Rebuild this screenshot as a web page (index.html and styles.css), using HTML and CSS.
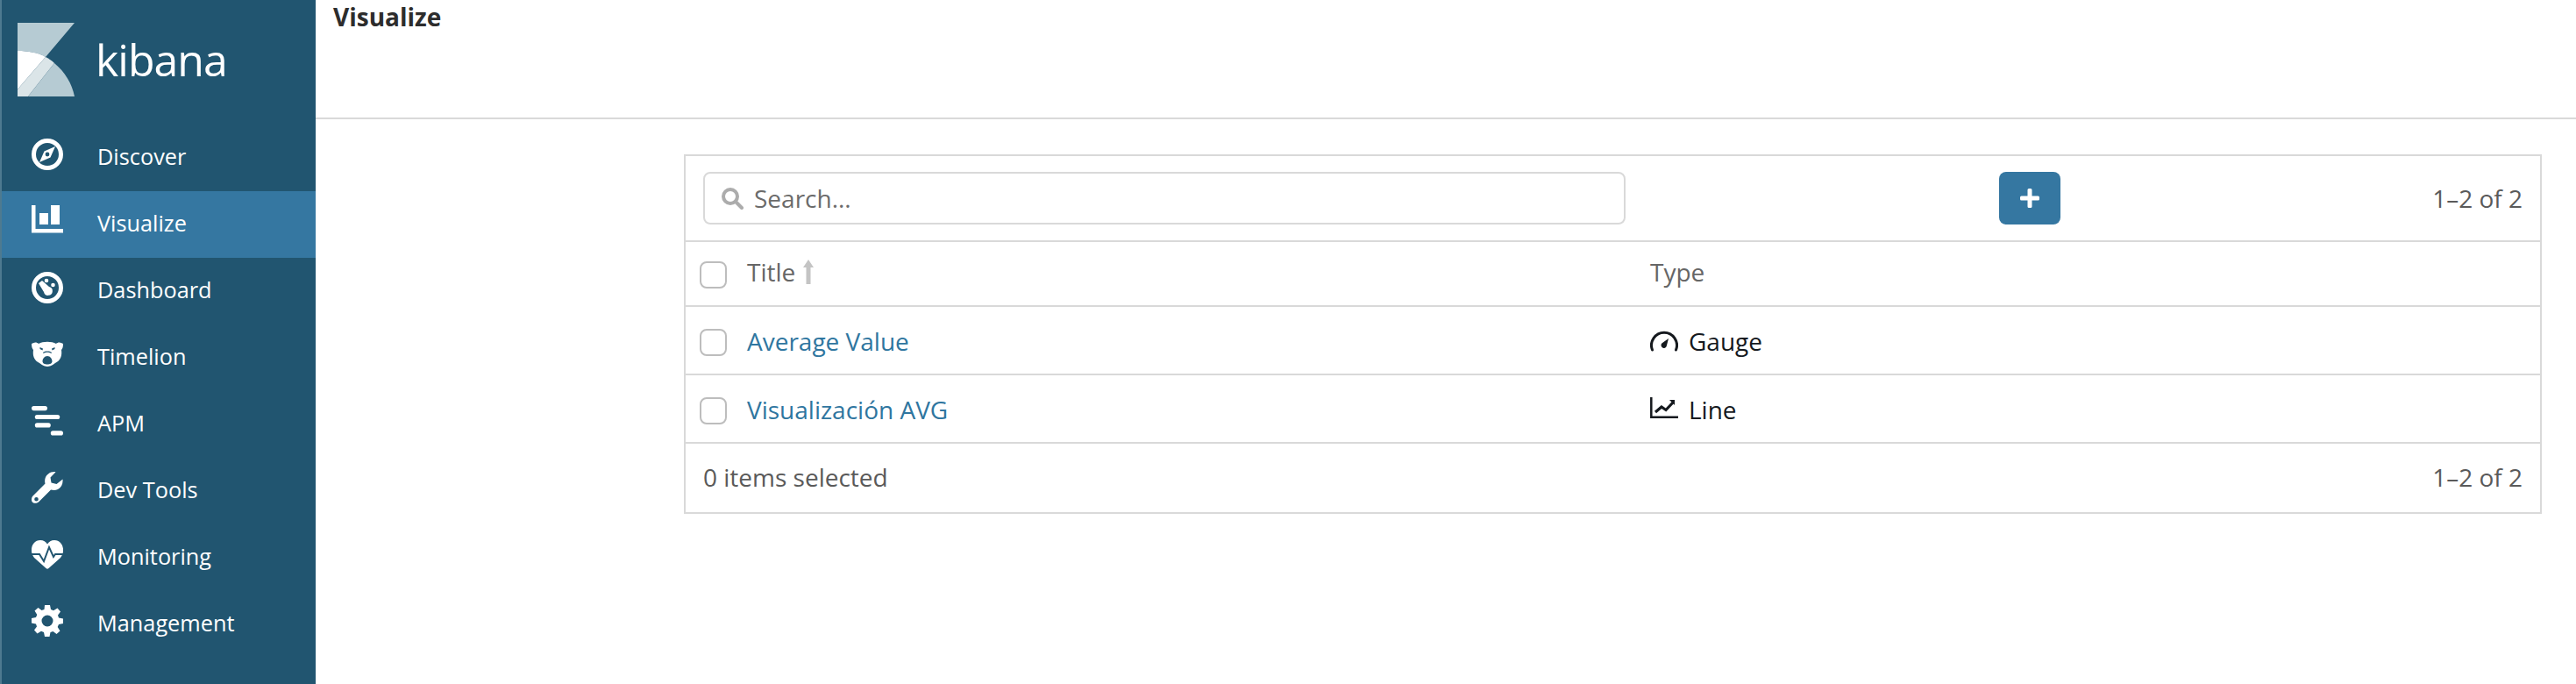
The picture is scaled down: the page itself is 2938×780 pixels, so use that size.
FILE: index.html
```html
<!DOCTYPE html>
<html lang="en">
<head>
<meta charset="utf-8">
<title>Visualize - Kibana</title>
<link rel="stylesheet" href="styles.css">
</head>
<body>
<div class="app">
  <nav class="sidebar">
    <div class="brand">
      <svg class="logo" width="65" height="84" viewBox="0 0 65 84">
        <path fill="#b6cbd3" d="M0 0H65L32 39C24 34 12 32 0 32Z"/>
        <path fill="#fff" d="M0 32C12 32 24 34 32 39L0 76Z"/>
        <path fill="#dbe5e8" d="M0 76L32 39C35 40.500 39 43 42 46L12 84H0Z"/>
        <path fill="#b6cbd3" d="M12 84L42 46C54 56 62 69 65 84Z"/>
      </svg>
      <span class="wordmark">kibana</span>
    </div>
    <a class="item"><span class="ico"><svg viewBox="0 0 36 36" width="36" height="36"><circle cx="18" cy="18" r="15.500" fill="none" stroke="#fff" stroke-width="5"/><path fill="#fff" fill-rule="evenodd" d="M27 9L21.500 21.500L9 27L14.500 14.500ZM18 15.600A2.400 2.400 0 1 0 18 20.400A2.400 2.400 0 1 0 18 15.600Z"/></svg></span><span class="label">Discover</span></a>
    <a class="item active"><span class="ico"><svg viewBox="0 0 36 36" width="36" height="36"><path fill="#fff" d="M0 0H4.500V27H36V31.500H0ZM9 9H19V22H9ZM22 0H32V22H22Z"/></svg></span><span class="label">Visualize</span></a>
    <a class="item"><span class="ico"><svg viewBox="0 0 36 36" width="36" height="36"><circle cx="18" cy="18" r="15.500" fill="none" stroke="#fff" stroke-width="5"/><path fill="#fff" d="M8 13L12 10L20 17A5 5 0 1 1 14 23Z"/><circle cx="17" cy="10" r="2.300" fill="#fff"/><circle cx="24.500" cy="15" r="2.300" fill="#fff"/></svg></span><span class="label">Dashboard</span></a>
    <a class="item"><span class="ico"><svg viewBox="0 0 36 30" width="36" height="30"><path fill="#fff" fill-rule="evenodd" d="M0 3C3 1 6 1 8 3C13 0 23 0 28 3C30 1 33 1 36 3C36 7 35 9 34 10C35 17 33 22 27 25C23 28 20 29 18 29C16 29 13 28 9 25C3 22 1 17 2 10C1 9 0 7 0 3ZM18 17C15 17 12.500 20 12.500 23C12.500 25.500 15 26.500 18 26.500C21 26.500 23.500 25.500 23.500 23C23.500 20 21 17 18 17ZM9.500 7L13 8.500L12.500 10.500L9.500 9ZM26.500 7L23 8.500L23.500 10.500L26.500 9ZM13.500 12.500C15 11 21 11 22.500 12.500L23 14L21.500 13.500C20 12.500 16 12.500 14.500 13.500L13 14Z"/></svg></span><span class="label">Timelion</span></a>
    <a class="item"><span class="ico"><svg viewBox="0 0 38 36" width="38" height="36"><g fill="#fff"><rect x="0" y="0" width="19" height="5.500" rx="2.700"/><rect x="4" y="10.500" width="30" height="5.500" rx="2.700"/><rect x="4" y="20.500" width="19" height="5.500" rx="2.700"/><rect x="23" y="30" width="15" height="5.500" rx="2.700"/></g></svg></span><span class="label">APM</span></a>
    <a class="item"><span class="ico"><svg viewBox="0 0 36 36" width="36" height="36"><path fill="#fff" fill-rule="evenodd" d="M35.500 8.500C36 14 34 18 30 20C27 21.500 24 21 22 20.500L8 34.500C5.500 36.500 2 36 0.800 34.500C-0.500 32.500 -0.300 29.500 1.500 27.500L15.500 13.500C14.500 9.500 15.500 5 19 2.500C21.500 0.500 24.500 -0.200 27.500 0.200L21.500 6.500L22.500 12.500L28.500 14L35.500 8.500ZM5.500 29A2.300 2.300 0 1 0 5.500 33.600A2.300 2.300 0 1 0 5.500 29Z"/></svg></span><span class="label">Dev Tools</span></a>
    <a class="item"><span class="ico"><svg viewBox="0 0 36 33" width="36" height="33"><path fill="#fff" d="M16.500 32L3 20C-3 13 0 0 10 0C13.500 0 16.500 2 18 4.500C19.500 2 22.500 0 26 0C36 0 39 13 33 20L19.500 32Q18 33.500 16.500 32Z"/><path d="M0 16H9L14 24L20 8L25 19L27 16H36" fill="none" stroke="#215570" stroke-width="2"/></svg></span><span class="label">Monitoring</span></a>
    <a class="item"><span class="ico"><svg viewBox="0 0 36 36" width="36" height="36"><path fill="#fff" fill-rule="evenodd" d="M15 0H21L22 5L25 6.300L29.500 3.500L33 7.500L30 11.500L31 14.500L36 15.500V21L31 22L29.700 25L32.500 29.500L28.500 33L24.500 30L21.500 31L20.500 36H15L14 31L11 29.700L6.500 32.500L3 28.500L6 24.500L5 21.500L0 20.500V15L5 14L6.300 11L3.500 6.500L7.500 3L11.500 6L14.500 5ZM18 11.500A6.500 6.500 0 1 0 18 24.500A6.500 6.500 0 1 0 18 11.500Z"/></svg></span><span class="label">Management</span></a>
  </nav>
  <main class="main">
    <header class="topbar"><h1 class="heading">Visualize</h1></header>
    <section class="panel">
      <div class="toolbar">
        <div class="search">
          <svg width="26" height="26" viewBox="0 0 26 26"><circle cx="11" cy="11" r="8" fill="none" stroke="#acacac" stroke-width="4"/><path d="M17 17L24 24" stroke="#acacac" stroke-width="4" stroke-linecap="round"/></svg>
          <span>Search...</span>
        </div>
        <div class="add-wrap">
          <button class="add"><svg width="22" height="22" viewBox="0 0 22 22"><path fill="#fff" d="M8.500 1.500Q8.500 0 10 0H12Q13.500 0 13.500 1.500V8.500H20.500Q22 8.500 22 10V12Q22 13.500 20.500 13.500H13.500V20.500Q13.500 22 12 22H10Q8.500 22 8.500 20.500V13.500H1.500Q0 13.500 0 12V10Q0 8.500 1.500 8.500H8.500Z"/></svg></button>
        </div>
        <div class="count">1–2 of 2</div>
      </div>
      <div class="row head">
        <span class="check"></span>
        <div class="col-title head-cell">Title <svg class="sort" width="12" height="28" viewBox="0 0 12 28"><path fill="#c4c4c4" d="M6 0L12 9H8.500V28H3.500V9H0Z"/></svg></div>
        <div class="col-type head-cell">Type</div>
      </div>
      <div class="row body">
        <span class="check"></span>
        <a class="col-title link">Average Value</a>
        <div class="type-cell"><svg width="32" height="24" viewBox="0 0 32 24"><path d="M2.500 22A14.500 14.500 0 1 1 29.500 22" fill="none" stroke="#15191e" stroke-width="3" stroke-linecap="round"/><path fill="#15191e" d="M21 9L18.800 17.500A3.200 3.200 0 1 1 14 14Z"/></svg><span>Gauge</span></div>
      </div>
      <div class="row body">
        <span class="check"></span>
        <a class="col-title link">Visualización AVG</a>
        <div class="type-cell"><svg class="line-icon" width="32" height="24" viewBox="0 0 32 24"><path d="M1.300 0V22.700H32" fill="none" stroke="#15191e" stroke-width="2.500"/><path d="M6 17L13 11L18 14.500L26 6" fill="none" stroke="#15191e" stroke-width="3.200"/><path fill="#15191e" d="M22 3H28V9Z"/></svg><span>Line</span></div>
      </div>
      <div class="footer">
        <span>0 items selected</span>
        <span>1–2 of 2</span>
      </div>
    </section>
  </main>
</div>
</body>
</html>
```

FILE: styles.css
```css
* { box-sizing: border-box; }
html, body { margin: 0; height: 100%; background: #fff; }
body { font-family: "Open Sans", sans-serif; font-size: 28px; color: #5a5a5a; overflow: hidden; }
.app { display: flex; height: 780px; }
.sidebar { width: 360px; flex: none; background: #215570; border-left: 2px solid #4e7a90; color: #fff; }
.brand { height: 142px; display: flex; align-items: flex-start; padding: 26px 0 0 18px; }
.logo { flex: none; }
.wordmark { margin: 12px 0 0 24px; font-size: 50px; line-height: 60px; font-weight: 500; letter-spacing: -1px; color: #fff; }
.item { height: 76px; display: flex; align-items: center; font-size: 25.3px; color: #fff; }
.item.active { background: #3577a1; }
.ico { width: 36px; margin: 0 39px 8px 34px; display: flex; justify-content: flex-end; flex: none; }
.label { margin-bottom: 5px; }
.main { flex: 1; min-width: 0; }
.topbar { height: 136px; border-bottom: 2px solid #d9d9d9; padding-left: 20px; }
.heading { margin: 0; font-size: 28px; line-height: 38px; font-weight: 700; color: #2d2d2d; }
.panel { margin: 40px 39px 0 420px; border: 2px solid #d9d9d9; }
.toolbar { height: 98px; display: flex; align-items: center; padding: 0 20px; border-bottom: 2px solid #d9d9d9; }
.search { width: 1052px; height: 60px; border: 2px solid #d9d9d9; border-radius: 8px; display: flex; align-items: center; gap: 12px; padding-left: 18px; color: #6b6b6b; flex: none; }
.add-wrap { width: 496px; display: flex; justify-content: flex-end; flex: none; }
.add { width: 70px; height: 60px; border: 0; border-radius: 8px; background: #3577a1; display: flex; align-items: center; justify-content: center; padding: 0; }
.count { margin-left: auto; }
.row { display: flex; align-items: center; border-bottom: 2px solid #d9d9d9; padding-left: 16px; }
.row.head { height: 74px; color: #666; }
.row.body { height: 78px; padding-top: 2px; }
.check { width: 31px; height: 31px; border: 2px solid #bdbdbd; border-radius: 8px; flex: none; margin-top: 2px; }
.col-title { width: 1030px; margin-left: 23px; flex: none; display: flex; align-items: center; gap: 9px; }
.head-cell { padding-bottom: 4px; }
.link { color: #2f76a0; }
.col-type { color: #666; }
.type-cell { display: flex; align-items: center; gap: 12px; color: #15191e; }
.line-icon { margin-bottom: 5px; }
.sort { flex: none; }
.footer { height: 78px; display: flex; align-items: center; justify-content: space-between; padding: 0 20px 3px; }
```
